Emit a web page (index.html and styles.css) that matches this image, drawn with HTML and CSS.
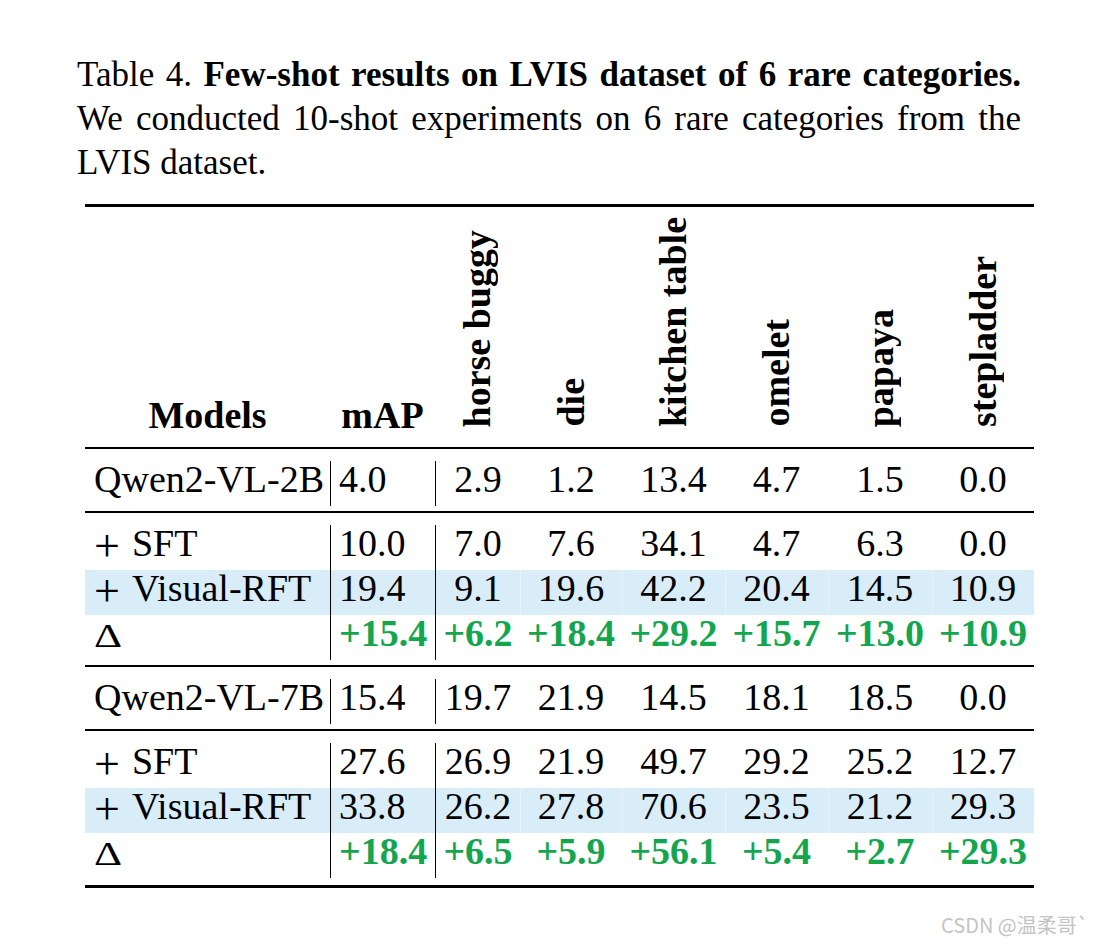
FILE: index.html
```html
<!DOCTYPE html>
<html lang="en">
<head>
<meta charset="utf-8">
<title>Table 4</title>
<link rel="stylesheet" href="styles.css">
</head>
<body>
<div class="page">
  <p class="caption">Table 4. <b>Few-shot results on LVIS dataset of 6 rare categories.</b> We conducted 10-shot experiments on 6 rare categories from the LVIS dataset.</p>

  <table class="results">
    <colgroup>
      <col class="w-model"><col class="w-map"><col class="w-85"><col class="w-102"><col class="w-103"><col class="w-103"><col class="w-104"><col class="w-102">
    </colgroup>
    <thead>
      <tr>
        <th class="h-text">Models</th>
        <th class="h-text">mAP</th>
        <th class="h-cat"><span class="vert">horse buggy</span></th>
        <th class="h-cat"><span class="vert">die</span></th>
        <th class="h-cat"><span class="vert">kitchen table</span></th>
        <th class="h-cat"><span class="vert">omelet</span></th>
        <th class="h-cat"><span class="vert">papaya</span></th>
        <th class="h-cat"><span class="vert">stepladder</span></th>
      </tr>
    </thead>
    <tbody>
      <tr class="gap"><td colspan="8"></td></tr>
      <tr>
        <td class="model">Qwen2-VL-2B</td><td class="map">4.0</td>
        <td class="num first">2.9</td><td class="num">1.2</td><td class="num">13.4</td><td class="num">4.7</td><td class="num">1.5</td><td class="num">0.0</td>
      </tr>
      <tr class="gap-end"><td colspan="8"></td></tr>
    </tbody>
    <tbody>
      <tr class="gap"><td colspan="8"></td></tr>
      <tr>
        <td class="model"><span class="plus">+</span>SFT</td><td class="map">10.0</td>
        <td class="num first">7.0</td><td class="num">7.6</td><td class="num">34.1</td><td class="num">4.7</td><td class="num">6.3</td><td class="num">0.0</td>
      </tr>
      <tr class="hl">
        <td class="model"><span class="plus">+</span>Visual-RFT</td><td class="map">19.4</td>
        <td class="num first">9.1</td><td class="num">19.6</td><td class="num">42.2</td><td class="num">20.4</td><td class="num">14.5</td><td class="num">10.9</td>
      </tr>
      <tr class="delta">
        <td class="model"><span class="tri">&Delta;</span></td><td class="map">+15.4</td>
        <td class="num first">+6.2</td><td class="num">+18.4</td><td class="num">+29.2</td><td class="num">+15.7</td><td class="num">+13.0</td><td class="num">+10.9</td>
      </tr>
      <tr class="gap-end"><td colspan="8"></td></tr>
    </tbody>
    <tbody>
      <tr class="gap"><td colspan="8"></td></tr>
      <tr>
        <td class="model">Qwen2-VL-7B</td><td class="map">15.4</td>
        <td class="num first">19.7</td><td class="num">21.9</td><td class="num">14.5</td><td class="num">18.1</td><td class="num">18.5</td><td class="num">0.0</td>
      </tr>
      <tr class="gap-end"><td colspan="8"></td></tr>
    </tbody>
    <tbody>
      <tr class="gap"><td colspan="8"></td></tr>
      <tr>
        <td class="model"><span class="plus">+</span>SFT</td><td class="map">27.6</td>
        <td class="num first">26.9</td><td class="num">21.9</td><td class="num">49.7</td><td class="num">29.2</td><td class="num">25.2</td><td class="num">12.7</td>
      </tr>
      <tr class="hl">
        <td class="model"><span class="plus">+</span>Visual-RFT</td><td class="map">33.8</td>
        <td class="num first">26.2</td><td class="num">27.8</td><td class="num">70.6</td><td class="num">23.5</td><td class="num">21.2</td><td class="num">29.3</td>
      </tr>
      <tr class="delta">
        <td class="model"><span class="tri">&Delta;</span></td><td class="map">+18.4</td>
        <td class="num first">+6.5</td><td class="num">+5.9</td><td class="num">+56.1</td><td class="num">+5.4</td><td class="num">+2.7</td><td class="num">+29.3</td>
      </tr>
      <tr class="gap-end last"><td colspan="8"></td></tr>
    </tbody>
  </table>

  <div class="watermark">CSDN @温柔哥`</div>
</div>
</body>
</html>
```

FILE: styles.css
```css
html, body {
  margin: 0;
  padding: 0;
  background: #ffffff;
}

body {
  font-family: "Liberation Serif", "Times New Roman", serif;
  color: #000000;
}

.page {
  position: relative;
  width: 1107px;
  height: 947px;
  box-sizing: border-box;
  padding: 53px 0 0 77px;
  overflow: hidden;
}

.caption {
  width: 944px;
  margin: 0;
  font-size: 35px;
  line-height: 44px;
  text-align: justify;
}

.caption b {
  font-weight: bold;
}

.results {
  margin: 19px 0 0 8px;
  width: 949px;
  table-layout: fixed;
  border-collapse: separate;
  border-spacing: 0;
  font-size: 38px;
  line-height: 37px;
}

.w-model { width: 245px; }
.w-map { width: 105px; }
.w-85 { width: 85px; }
.w-102 { width: 102px; }
.w-103 { width: 103px; }
.w-104 { width: 104px; }

.results th,
.results td {
  box-sizing: border-box;
  padding: 0;
  white-space: nowrap;
}

.results thead th {
  height: 245px;
  border-top: 3px solid #000;
  border-bottom: 2px solid #000;
  vertical-align: bottom;
  text-align: center;
  font-weight: bold;
}

.results th.h-text {
  padding-bottom: 13px;
}

.results th.h-cat {
  padding-bottom: 20px;
}

.vert {
  display: inline-block;
  vertical-align: bottom;
  writing-mode: vertical-rl;
  transform: rotate(180deg);
  white-space: nowrap;
}

.results tr.gap td {
  height: 12px;
  line-height: 0;
}

.results tr.gap-end td {
  height: 7px;
  line-height: 0;
  border-bottom: 2px solid #000;
}

.results tr.gap-end.last td {
  height: 10px;
  border-bottom: 3px solid #000;
}

.results td.model,
.results td.map,
.results td.num {
  padding-bottom: 8px;
  vertical-align: top;
}

.results td.model {
  text-align: left;
  padding-left: 9px;
}

.results td.map {
  text-align: left;
  padding-left: 8px;
  border-left: 1px solid #000;
}

.results td.num {
  text-align: center;
}

.results td.num.first {
  border-left: 1px solid #000;
}

.results tr.hl td {
  background: #d9edf8;
}

.results tr.hl td.num + td.num {
  box-shadow: inset 1px 0 0 #e6f3fb;
}

.results tr.delta td.map,
.results tr.delta td.num {
  color: #13a64f;
  font-weight: bold;
}

.plus {
  display: inline-block;
  font-size: 46px;
  line-height: 0;
  margin-right: 12px;
  transform: translateY(5px);
}

.tri {
  display: inline-block;
  font-weight: normal;
  transform: scale(1.15, 0.88);
  transform-origin: left bottom;
}

.watermark {
  position: absolute;
  left: 941px;
  top: 910px;
  font-family: "Noto Sans CJK SC", "Noto Sans", sans-serif;
  font-size: 20px;
  color: #c4c4c4;
  white-space: nowrap;
}
```
